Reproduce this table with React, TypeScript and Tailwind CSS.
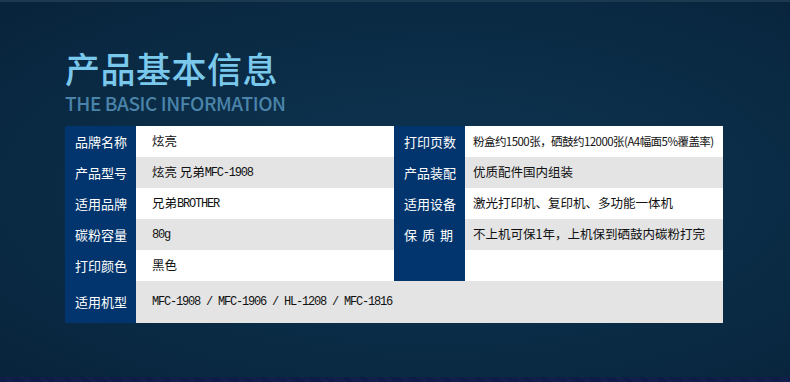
const cjk = 'font-["Noto_Sans_CJK_SC",sans-serif]'

type Cell = { label: string; value: React.ReactNode; grey: boolean }

function Mono({ children }: { children: React.ReactNode }) {
  return <span className='font-["Liberation_Mono",monospace] text-[12px] tracking-[-1.2px]'>{children}</span>
}

function Label({ text, spaced }: { text?: string; spaced?: boolean }) {
  return (
    <div className={`flex items-center bg-[#02356d] pl-[10px] text-[13px] text-white ${cjk} ${spaced ? 'tracking-[5px]' : ''}`}>
      {text}
    </div>
  )
}

function Value({ children, grey, pad }: { children?: React.ReactNode; grey: boolean; pad: string }) {
  return (
    <div className={`flex items-center whitespace-nowrap text-[12.5px] text-[#111] ${cjk} ${pad} ${grey ? 'bg-[#e4e4e4]' : 'bg-white'}`}>
      {children}
    </div>
  )
}

const left: Cell[] = [
  { label: '品牌名称', value: '炫亮', grey: false },
  { label: '产品型号', value: <>炫亮 兄弟<Mono>MFC-1908</Mono></>, grey: true },
  { label: '适用品牌', value: <>兄弟<Mono>BROTHER</Mono></>, grey: false },
  { label: '碳粉容量', value: <Mono>80g</Mono>, grey: true },
  { label: '打印颜色', value: '黑色', grey: false },
]

const right: Cell[] = [
  {
    label: '打印页数',
    value: <span className="text-[11.5px] tracking-[-0.55px]">粉盒约1500张，硒鼓约12000张(A4幅面5%覆盖率)</span>,
    grey: false,
  },
  { label: '产品装配', value: '优质配件国内组装', grey: true },
  { label: '适用设备', value: '激光打印机、复印机、多功能一体机', grey: false },
  { label: '保质期', value: '不上机可保1年，上机保到硒鼓内碳粉打完', grey: true },
  { label: '', value: null, grey: false },
]

export default function App() {
  return (
    <div className="flex h-[382px] w-[790px] flex-col bg-[radial-gradient(ellipse_at_55%_50%,#0e3452_0%,#0b2c46_55%,#08233b_100%)]">
      <div className="h-[2px] shrink-0 bg-[#1b3a50]" />
      <div className="flex flex-1 flex-col pl-[65px] pt-[48px]">
        <h1 className={`m-0 text-[35px] leading-[36px] font-medium tracking-[0.5px] text-[#7ac8ec] ${cjk}`}>产品基本信息</h1>
        <p className={`m-0 mt-[7px] text-[19px] leading-[20px] font-medium tracking-[-0.4px] text-[#4a84aa] ${cjk}`}>THE BASIC INFORMATION</p>

        <div className="mt-[13px] grid w-[658px] grid-cols-[71px_258px_71px_258px] grid-rows-[31px_31px_31px_31px_31px_42px]">
          {left.map((l, i) => (
            <div key={l.label} className="contents">
              <Label text={l.label} />
              <Value grey={l.grey} pad="pl-[16px]">{l.value}</Value>
              <Label text={right[i].label} spaced={right[i].label === '保质期'} />
              <Value grey={right[i].grey} pad="pl-[8px]">{right[i].value}</Value>
            </div>
          ))}
          <Label text="适用机型" />
          <div className={`col-span-3 flex items-center bg-[#e4e4e4] pl-[16px] text-[#111] ${cjk}`}>
            <Mono>MFC-1908 / MFC-1906 / HL-1208 / MFC-1816</Mono>
          </div>
        </div>
      </div>
      <div className="h-[5px] shrink-0 bg-[repeating-linear-gradient(45deg,#0a1a44_0px,#0a1a44_1px,#13224f_1px,#13224f_2px)]" />
    </div>
  )
}
